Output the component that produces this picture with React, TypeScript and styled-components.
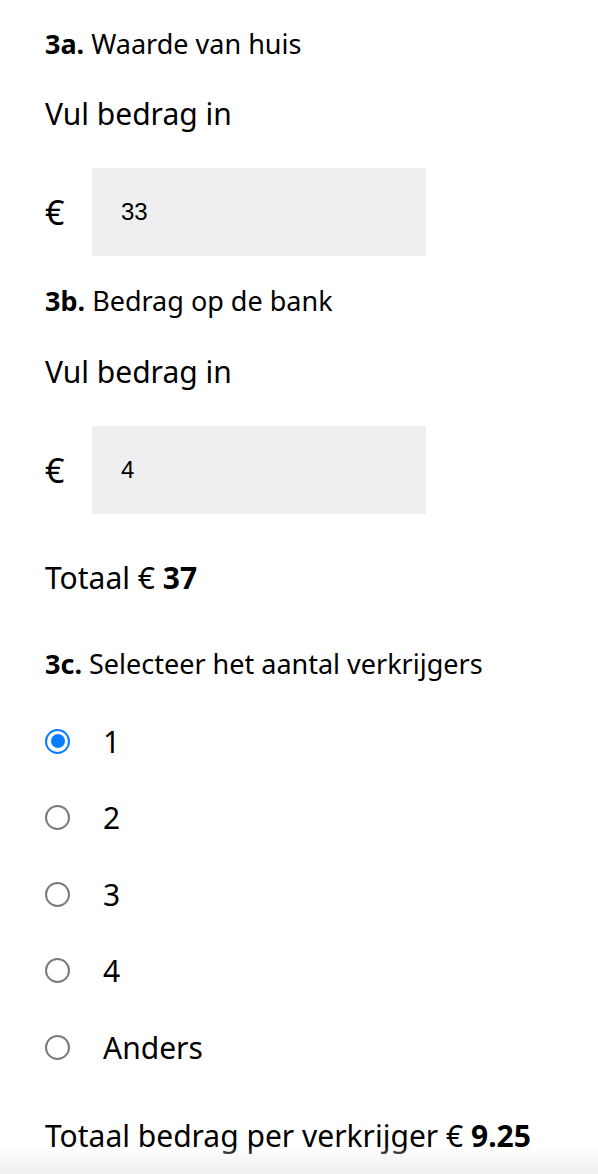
import React from "react";
import styled, { createGlobalStyle } from "styled-components";

const Global = createGlobalStyle`
  html, body { margin: 0; padding: 0; background: #fff; }
  body { font-family: "Noto Sans", "Open Sans", sans-serif; color: #000; }
`;

const Page = styled.div`
  display: flex;
  flex-direction: column;
  padding: 28px 0 60px 45px;
`;

const Heading = styled.div<{ $mt?: number }>`
  font-size: 27px;
  line-height: 32px;
  margin-top: ${(p) => p.$mt ?? 0}px;
  b { font-weight: 700; }
`;

const Text = styled.div<{ $mt?: number }>`
  font-size: 30px;
  line-height: 40px;
  margin-top: ${(p) => p.$mt ?? 0}px;
  b { font-weight: 700; }
`;

const InputRow = styled.div<{ $mt?: number }>`
  display: flex;
  align-items: center;
  margin-top: ${(p) => p.$mt ?? 0}px;
`;

const Currency = styled.span`
  font-size: 34px;
  width: 47px;
`;

const AmountInput = styled.input`
  box-sizing: border-box;
  width: 334px;
  height: 88px;
  border: none;
  outline: none;
  background: #efeff1;
  padding: 0 0 0 29px;
  font-family: "Liberation Sans", Arial, sans-serif;
  font-size: 24px;
  color: #000;
`;

const RadioList = styled.div<{ $mt?: number }>`
  display: flex;
  flex-direction: column;
  margin-top: ${(p) => p.$mt ?? 0}px;
`;

const RadioRow = styled.label`
  display: flex;
  align-items: center;
  height: 76.5px;
  gap: 33px;
  font-size: 30px;
`;

const RadioCircle = styled.span<{ $checked: boolean }>`
  box-sizing: border-box;
  width: 25px;
  height: 25px;
  border-radius: 50%;
  border: ${(p) => (p.$checked ? "2.5px solid #0a7cff" : "2px solid #7a7a7a")};
  display: flex;
  align-items: center;
  justify-content: center;
  &::after {
    content: "";
    display: ${(p) => (p.$checked ? "block" : "none")};
    width: 14px;
    height: 14px;
    border-radius: 50%;
    background: #0a7cff;
  }
`;

const BottomFade = styled.div`
  position: fixed;
  left: 0;
  right: 0;
  bottom: 0;
  height: 28px;
  background: linear-gradient(to bottom, rgba(240,240,240,0), rgba(238,238,238,1));
  pointer-events: none;
`;

const options = ["1", "2", "3", "4", "Anders"];

export default function App() {
  const [sel, setSel] = React.useState("1");
  return (
    <>
      <Global />
      <Page>
        <Heading>
          <b>3a.</b> Waarde van huis
        </Heading>
        <Text $mt={34}>Vul bedrag in</Text>
        <InputRow $mt={34}>
          <Currency>€</Currency>
          <AmountInput defaultValue="33" />
        </InputRow>
        <Heading $mt={29}>
          <b>3b.</b> Bedrag op de bank
        </Heading>
        <Text $mt={35}>Vul bedrag in</Text>
        <InputRow $mt={34}>
          <Currency>€</Currency>
          <AmountInput defaultValue="4" />
        </InputRow>
        <Text $mt={44}>
          Totaal € <b>37</b>
        </Text>
        <Heading $mt={50}>
          <b>3c.</b> Selecteer het aantal verkrijgers
        </Heading>
        <RadioList $mt={23}>
          {options.map((o) => (
            <RadioRow key={o} onClick={() => setSel(o)}>
              <RadioCircle $checked={sel === o} />
              <span>{o}</span>
            </RadioRow>
          ))}
        </RadioList>
        <Text $mt={30}>
          Totaal bedrag per verkrijger € <b>9.25</b>
        </Text>
      </Page>
      <BottomFade />
    </>
  );
}
